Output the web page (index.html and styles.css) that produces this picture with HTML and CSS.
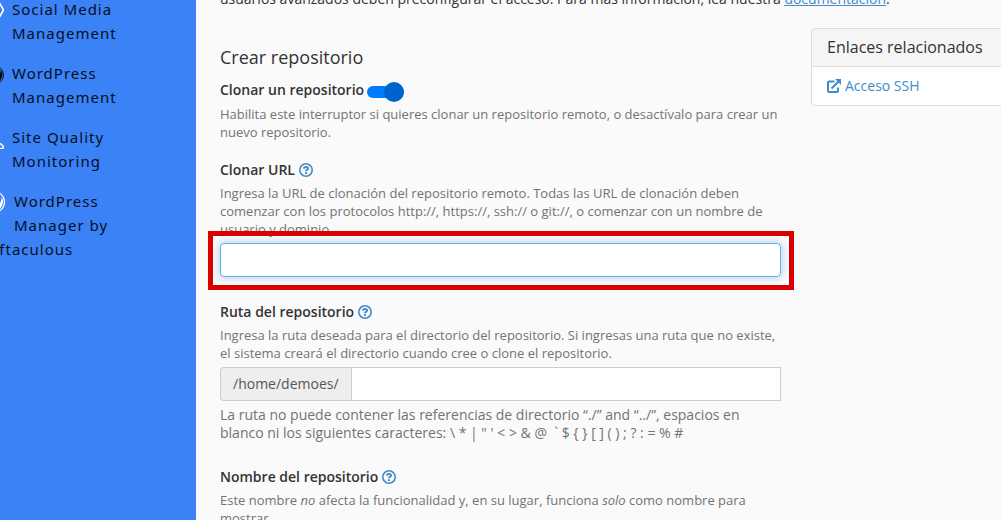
FILE: index.html
```html
<!DOCTYPE html>
<html lang="es">
<head>
  <meta charset="UTF-8" />
  <meta name="viewport" content="width=device-width, initial-scale=1.0"/>
  <title>Crear repositorio</title>
  <link rel="stylesheet" href="styles.css">
</head>
<body>

  <nav class="sidebar">
    <ul class="menu">
      <li>
        <a href="#">
          <svg class="menu-icon" viewBox="0 0 24 24" fill="none" stroke="#fff" stroke-width="1.6"><path d="M5 5h14l4.500 8-4.500 8H5l-4-8z"/></svg>
          Social Media Management
        </a>
      </li>
      <li>
        <a href="#">
          <svg class="menu-icon" viewBox="0 0 24 24"><circle cx="14" cy="14" r="9.5" fill="none" stroke="#101828"/><path d="M6 14a8 8 0 0 0 16.500-1c0-2-1-3.500-2-4.500.8 3-3 9-4 12L12 9z" fill="#05070c"/></svg>
          WordPress Management
        </a>
      </li>
      <li>
        <a href="#">
          <svg class="menu-icon" viewBox="0 0 24 24" fill="none" stroke="#fff" stroke-width="1.6"><path d="M3 22a4 4 0 0 1 3-6 6 6 0 0 1 11-1M16 17.500c3 .2 7.500 2.500 7.300 5-.1 1.200-2 1.300-4.300 1"/></svg>
          Site Quality Monitoring
        </a>
      </li>
      <li>
        <a href="#">
          <svg class="menu-icon wide" viewBox="0 0 26 24"><circle cx="14" cy="13" r="10.500" fill="none" stroke="#fff" stroke-width="1.2"/><path d="M5 13a9 9 0 0 0 18 0c0-2-.5-3.500-1.500-5 .5 4-3 9-4.500 12L11 8z" fill="#fff"/></svg>
          WordPress Manager by Softaculous
        </a>
      </li>
    </ul>
  </nav>

  <main class="content">
    <p class="intro">usuarios avanzados deben preconfigurar el acceso. Para más información, lea nuestra <a href="#">documentación</a>.</p>

    <div class="row">
      <form class="repo-form">
        <h2>Crear repositorio</h2>

        <div class="form-group toggle-group">
          <div class="label-row">
            <label for="clone">Clonar un repositorio</label>
            <input type="checkbox" id="clone" class="toggle" checked>
          </div>
          <p class="help">Habilita este interruptor si quieres clonar un repositorio remoto, o desactívalo para crear un nuevo repositorio.</p>
        </div>

        <div class="form-group">
          <div class="label-row">
            <label for="cloneUrl">Clonar URL</label>
            <button type="button" class="help-btn" aria-label="Ayuda">
              <svg viewBox="0 0 14 14" fill="none" stroke="currentColor"><circle cx="7" cy="7" r="6.2" stroke-width="1.6"/><path d="M4.900 5.600C5.100 3.400 9 3.300 9 5.400 9 6.800 7 6.700 7 8.300M7 9.200v1.800" stroke-width="2"/></svg>
            </button>
          </div>
          <p class="help">Ingresa la URL de clonación del repositorio remoto. Todas las URL de clonación deben comenzar con los protocolos http://, https://, ssh:// o git://, o comenzar con un nombre de usuario y dominio.</p>
          <div class="highlight">
            <input type="text" id="cloneUrl" class="form-control active">
          </div>
        </div>

        <div class="form-group">
          <div class="label-row">
            <label for="repoPath">Ruta del repositorio</label>
            <button type="button" class="help-btn" aria-label="Ayuda">
              <svg viewBox="0 0 14 14" fill="none" stroke="currentColor"><circle cx="7" cy="7" r="6.2" stroke-width="1.6"/><path d="M4.900 5.600C5.100 3.400 9 3.300 9 5.400 9 6.800 7 6.700 7 8.300M7 9.200v1.800" stroke-width="2"/></svg>
            </button>
          </div>
          <p class="help">Ingresa la ruta deseada para el directorio del repositorio. Si ingresas una ruta que no existe, el sistema creará el directorio cuando cree o clone el repositorio.</p>
          <div class="input-group">
            <span class="addon">/home/demoes/</span>
            <input type="text" id="repoPath" class="form-control">
          </div>
          <p class="note">La ruta no puede contener las referencias de directorio “./” and “../”, espacios en blanco ni los siguientes caracteres: \ * | " ' &lt; &gt; &amp; @ &nbsp;` $ { } [ ] ( ) ; ? : = % #</p>
        </div>

        <div class="form-group">
          <div class="label-row">
            <label for="repoName">Nombre del repositorio</label>
            <button type="button" class="help-btn" aria-label="Ayuda">
              <svg viewBox="0 0 14 14" fill="none" stroke="currentColor"><circle cx="7" cy="7" r="6.2" stroke-width="1.6"/><path d="M4.900 5.600C5.100 3.400 9 3.300 9 5.400 9 6.800 7 6.700 7 8.300M7 9.200v1.800" stroke-width="2"/></svg>
            </button>
          </div>
          <p class="help">Este nombre <em>no</em> afecta la funcionalidad y, en su lugar, funciona <em>solo</em> como nombre para mostrar.</p>
          <input type="text" id="repoName" class="form-control">
        </div>
      </form>

      <aside class="panel">
        <h3>Enlaces relacionados</h3>
        <a href="#">
          <svg viewBox="0 0 14 14" fill="none" stroke="currentColor" stroke-width="2"><path d="M7.500 2.500H2Q1 2.500 1 3.500V12q0 1 1 1h8q1 0 1-1V8.500M4.500 9.500L12 2"/><path d="M8 0h6v6z" fill="currentColor" stroke="none"/></svg>
          Acceso SSH
        </a>
      </aside>
    </div>
  </main>

</body>
</html>
```
FILE: styles.css
```css
* {
  box-sizing: border-box;
}
body {
  display: flex;
  height: 100vh;
  margin: 0;
  overflow: hidden;
  font-family: 'Open Sans', sans-serif;
  font-size: 14px;
  line-height: 20px;
  background: #fafafa;
  color: #333;
}
h2, h3, p, ul {
  margin: 0;
}
a {
  color: #428bca;
}

/* Sidebar */
.sidebar {
  flex: 0 0 196px;
  overflow: hidden;
  background: #3b82f6;
}
.menu {
  margin: -3px 0 0 -20px;
  padding: 0 24px 0 0;
  list-style: none;
}
.menu li {
  margin-bottom: 16px;
}
.menu a {
  display: block;
  font-family: 'Noto Sans', sans-serif;
  font-size: 15px;
  line-height: 24px;
  letter-spacing: 1px;
  color: #06101f;
  text-decoration: none;
}
.menu-icon {
  float: left;
  width: 24px;
  height: 24px;
  margin: 0 8px 8px 0;
}
.menu-icon.wide {
  width: 26px;
}

/* Content */
.content {
  flex: 1;
  min-width: 0;
  padding-left: 24px;
}
.intro {
  margin: -11px 0 19px;
}
.row {
  display: flex;
  align-items: flex-start;
  gap: 30px;
  margin-right: -30px;
}
.repo-form {
  flex: 1;
  padding-top: 19px;
}
.repo-form h2 {
  margin-bottom: 13px;
  font-size: 18px;
  font-weight: 500;
  line-height: 20px;
}
.form-group {
  margin-bottom: 25px;
}
.toggle-group {
  margin-bottom: 19px;
}
.label-row {
  display: flex;
  align-items: center;
  gap: 4px;
  margin-bottom: 4px;
}
.toggle-group .label-row {
  gap: 3px;
  margin-bottom: 5px;
}
.label-row label {
  font-weight: 600;
}
.help {
  margin-bottom: 5px;
  font-size: 13px;
  line-height: 18px;
  color: #737373;
}
.toggle-group .help {
  margin-bottom: 0;
}
.note {
  margin-top: 5px;
  line-height: 18px;
  color: #737373;
}
.help-btn {
  display: flex;
  padding: 0;
  border: none;
  background: none;
  color: #428bca;
  cursor: pointer;
}
.help-btn svg {
  width: 14px;
  height: 14px;
}
.form-control {
  display: block;
  width: 100%;
  height: 34px;
  padding: 6px 12px;
  border: 1px solid #ccc;
  border-radius: 4px;
  background: #fff;
  font: inherit;
  color: #555;
}
.form-control.active {
  border-color: #66afe9;
  box-shadow: 0 0 8px rgba(102, 175, 233, 0.6);
}

/* Red frame around the field */
.highlight {
  position: relative;
}
.highlight::after {
  content: "";
  position: absolute;
  inset: -12px -13px -13px -12px;
  border: 5px solid #d90000;
  pointer-events: none;
}
.input-group {
  display: flex;
}
.addon {
  padding: 6px 12px;
  border: 1px solid #ccc;
  border-right: none;
  border-radius: 4px 0 0 4px;
  background: #eee;
  color: #555;
}
.input-group .form-control {
  flex: 1;
  border-radius: 0;
}

/* Toggle */
.toggle {
  position: relative;
  width: 37px;
  height: 12px;
  margin: 4px 0 0;
  appearance: none;
  border-radius: 6px;
  background: #007bff;
  cursor: pointer;
}
.toggle::after {
  content: "";
  position: absolute;
  top: -4px;
  right: 0;
  width: 20px;
  height: 20px;
  border-radius: 50%;
  background: #0062cc;
}

/* Related links */
.panel {
  flex: 0 0 220px;
  border: 1px solid #ddd;
  border-radius: 4px;
  background: #fff;
}
.panel h3 {
  padding: 9px 15px;
  border-bottom: 1px solid #ddd;
  border-radius: 4px 4px 0 0;
  background: #f5f5f5;
  font-size: 16px;
  font-weight: 500;
  line-height: 19px;
}
.panel a {
  display: flex;
  align-items: center;
  gap: 4px;
  padding: 9px 15px;
  text-decoration: none;
}
.panel svg {
  width: 14px;
  height: 14px;
}
```
